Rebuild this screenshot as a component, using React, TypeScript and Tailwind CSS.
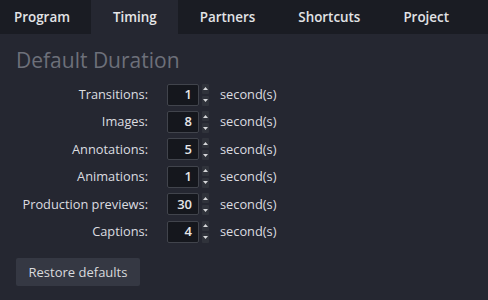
import React from "react";

const tabs = ["Program", "Timing", "Partners", "Shortcuts", "Project"];
const rows: [string, string][] = [
  ["Transitions:", "1"],
  ["Images:", "8"],
  ["Annotations:", "5"],
  ["Animations:", "1"],
  ["Production previews:", "30"],
  ["Captions:", "4"],
];

function Spinner() {
  return (
    <div className="ml-[3px] flex h-[22px] w-[7px] flex-col justify-between">
      <div className="flex h-[10px] w-[7px] items-center justify-center rounded-[1px] bg-[#30333b]">
        <svg width="5" height="3" viewBox="0 0 5 3">
          <path d="M0 3 L2.5 0 L5 3 Z" fill="#d6d7da" />
        </svg>
      </div>
      <div className="flex h-[10px] w-[7px] items-center justify-center rounded-[1px] bg-[#30333b]">
        <svg width="5" height="3" viewBox="0 0 5 3">
          <path d="M0 0 L2.5 3 L5 0 Z" fill="#d6d7da" />
        </svg>
      </div>
    </div>
  );
}

export default function App() {
  return (
    <div
      className="flex h-[300px] w-[488px] flex-col bg-[#252731] text-[#dcdde0]"
      style={{ fontFamily: "'Open Sans', Lato, sans-serif" }}
    >
      <div className="flex h-[34px] bg-[#1a1c23]">
        {tabs.map((t, i) => (
          <div
            key={t}
            className={
              "flex h-full items-center text-[13.4px] font-semibold " +
              (i === 0 ? "pl-[14px] pr-[21.5px] " : "px-[21.5px] ") +
              (t === "Timing" ? "bg-[#252731] text-[#e6e6e8]" : "text-[#e2e3e6]")
            }
          >
            {t}
          </div>
        ))}
      </div>
      <div className="flex flex-col px-4">
        <div className="mt-[12px] text-[21px] leading-[28px] text-[#6d707a]">Default Duration</div>
        <div className="mt-[7px] flex flex-col">
          {rows.map(([label, value]) => (
            <div key={label} className="flex h-[27.4px] items-center text-[12.8px] font-medium">
              <div className="w-[132px] text-right">{label}</div>
              <div className="ml-[19px] flex h-[22px] w-[32px] items-center justify-end rounded-[2px] border border-[#41444c] bg-[#15171d] pr-[6px] text-[13px] font-semibold text-[#e6e6e8]">
                {value}
              </div>
              <Spinner />
              <div className="ml-[11px]">second(s)</div>
            </div>
          ))}
        </div>
        <div className="mt-[13px]">
          <div className="flex h-[28px] w-[124px] items-center justify-center rounded-[2px] bg-[#353843] text-[13px] font-medium text-[#d9dadd]">
            Restore defaults
          </div>
        </div>
      </div>
    </div>
  );
}
